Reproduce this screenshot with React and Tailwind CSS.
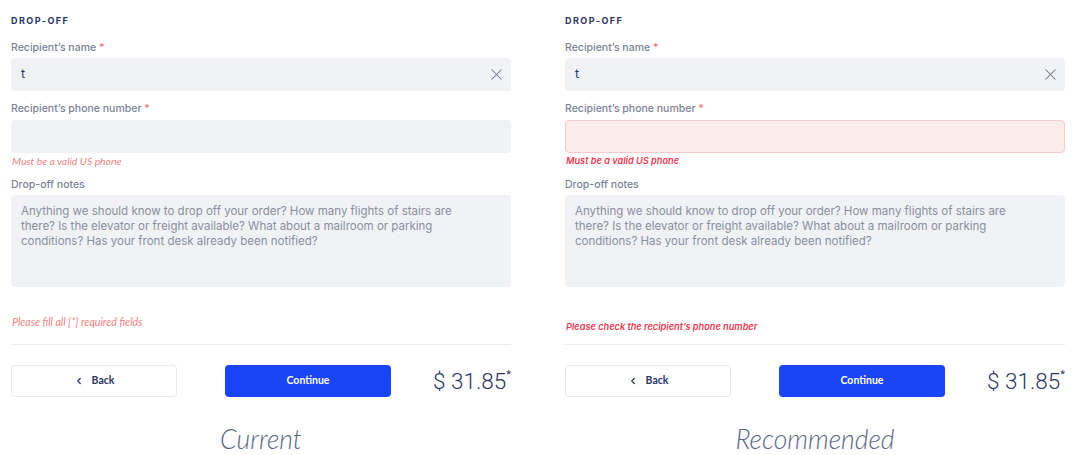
import { X, ChevronLeft } from 'lucide-react';

const inter = { fontFamily: 'Inter, "Noto Sans", sans-serif' };
const lato = { fontFamily: 'Lato, sans-serif' };

function Label({ children, required }) {
  return (
    <div className="text-[10.5px] leading-[14px] font-medium text-[#7c8299]" style={inter}>
      {children}
      {required && <span className="text-[#f07373]"> *</span>}
    </div>
  );
}

function DropOff({ variant }) {
  const rec = variant === 'recommended';

  return (
    <div className="w-[500px] flex flex-col">
      {/* Header */}
      <div className="pt-[16px] text-[9px] leading-[10px] font-bold tracking-[0.16em] text-[#2a346a]" style={inter}>
        DROP-OFF
      </div>

      <div className="mt-[15px]">
        <Label required>Recipient’s name</Label>
      </div>
      <div className="mt-[3px] h-[33px] rounded-[4px] bg-[#f1f2f5] flex items-center justify-between pl-[10px] pr-[5px]">
        <span className="text-[12.5px] text-[#2b3566]" style={inter}>t</span>
        <X size={19} strokeWidth={1.3} className="text-[#6e7488]" />
      </div>

      <div className="mt-[11px]">
        <Label required>Recipient’s phone number</Label>
      </div>
      <div
        className={
          rec
            ? 'mt-[4px] h-[33px] rounded-[4px] bg-[#fcebeb] border border-[#f6cccc]'
            : 'mt-[4px] h-[33px] rounded-[4px] bg-[#f1f2f5]'
        }
      />
      {rec ? (
        <div className="mt-[2px] pl-[1px] text-[9.2px] leading-[12px] font-semibold italic text-[#f03a52]" style={inter}>
          Must be a valid US phone
        </div>
      ) : (
        <div className="mt-[2px] pl-[1px] text-[10.4px] leading-[12px] italic text-[#f07f7f]" style={lato}>
          Must be a valid US phone
        </div>
      )}

      <div className="mt-[11px]">
        <Label>Drop-off notes</Label>
      </div>
      <div className="mt-[3px] h-[92px] rounded-[4px] bg-[#f1f2f5] px-[10px] pt-[9px] text-[11.5px] leading-[15px] text-[#8a8fa1]" style={inter}>
        <span className="block">Anything we should know to drop off your order? How many flights of stairs are</span>
        <span className="block">there? Is the elevator or freight available? What about a mailroom or parking</span>
        <span className="block">conditions? Has your front desk already been notified?</span>
      </div>

      {/* Form error */}
      {rec ? (
        <div className="h-[57px] flex items-end pb-[11px] pl-[1px] text-[9.2px] leading-[12px] font-semibold italic text-[#f03a52]" style={inter}>
          Please check the recipient’s phone number
        </div>
      ) : (
        <div className="h-[57px] flex items-end pb-[16px] pl-[1px] text-[10.6px] leading-[12px] italic text-[#f07f7f]" style={lato}>
          Please fill all [*] required fields
        </div>
      )}

      <div className="border-t border-[#e9ecf2]" />

      {/* Actions */}
      <div className="mt-[20px] flex items-center">
        <button
          className="w-[166px] h-[32px] rounded-[4px] border border-[#e6e9ef] bg-white flex items-center justify-center gap-[8px] text-[10.5px] font-bold text-[#2b3566]"
          style={lato}
        >
          <ChevronLeft size={10} strokeWidth={3} />
          Back
        </button>
        <button
          className="ml-[48px] w-[166px] h-[32px] rounded-[4px] bg-[#1a45f6] text-white text-[10.5px] font-bold flex items-center justify-center"
          style={lato}
        >
          Continue
        </button>
        <div className="flex-1 flex justify-end items-start text-[#2c3566]" style={{ fontFamily: 'Roboto, sans-serif' }}>
          <span className="text-[22.5px] leading-[28px] font-light">$ 31.85</span>
          <span className="text-[11px] leading-[11px] mt-[2px]">*</span>
        </div>
      </div>

      <div
        className="mt-[27px] text-center text-[26.5px] leading-[30px] italic font-light text-[#5c6687]"
        style={lato}
      >
        {rec ? 'Recommended' : 'Current'}
      </div>
    </div>
  );
}

export default function App() {
  return (
    <div className="w-[1081px] h-[455px] bg-white overflow-hidden flex gap-[54px] pl-[11px]">
      <DropOff variant="current" />
      <DropOff variant="recommended" />
    </div>
  );
}
